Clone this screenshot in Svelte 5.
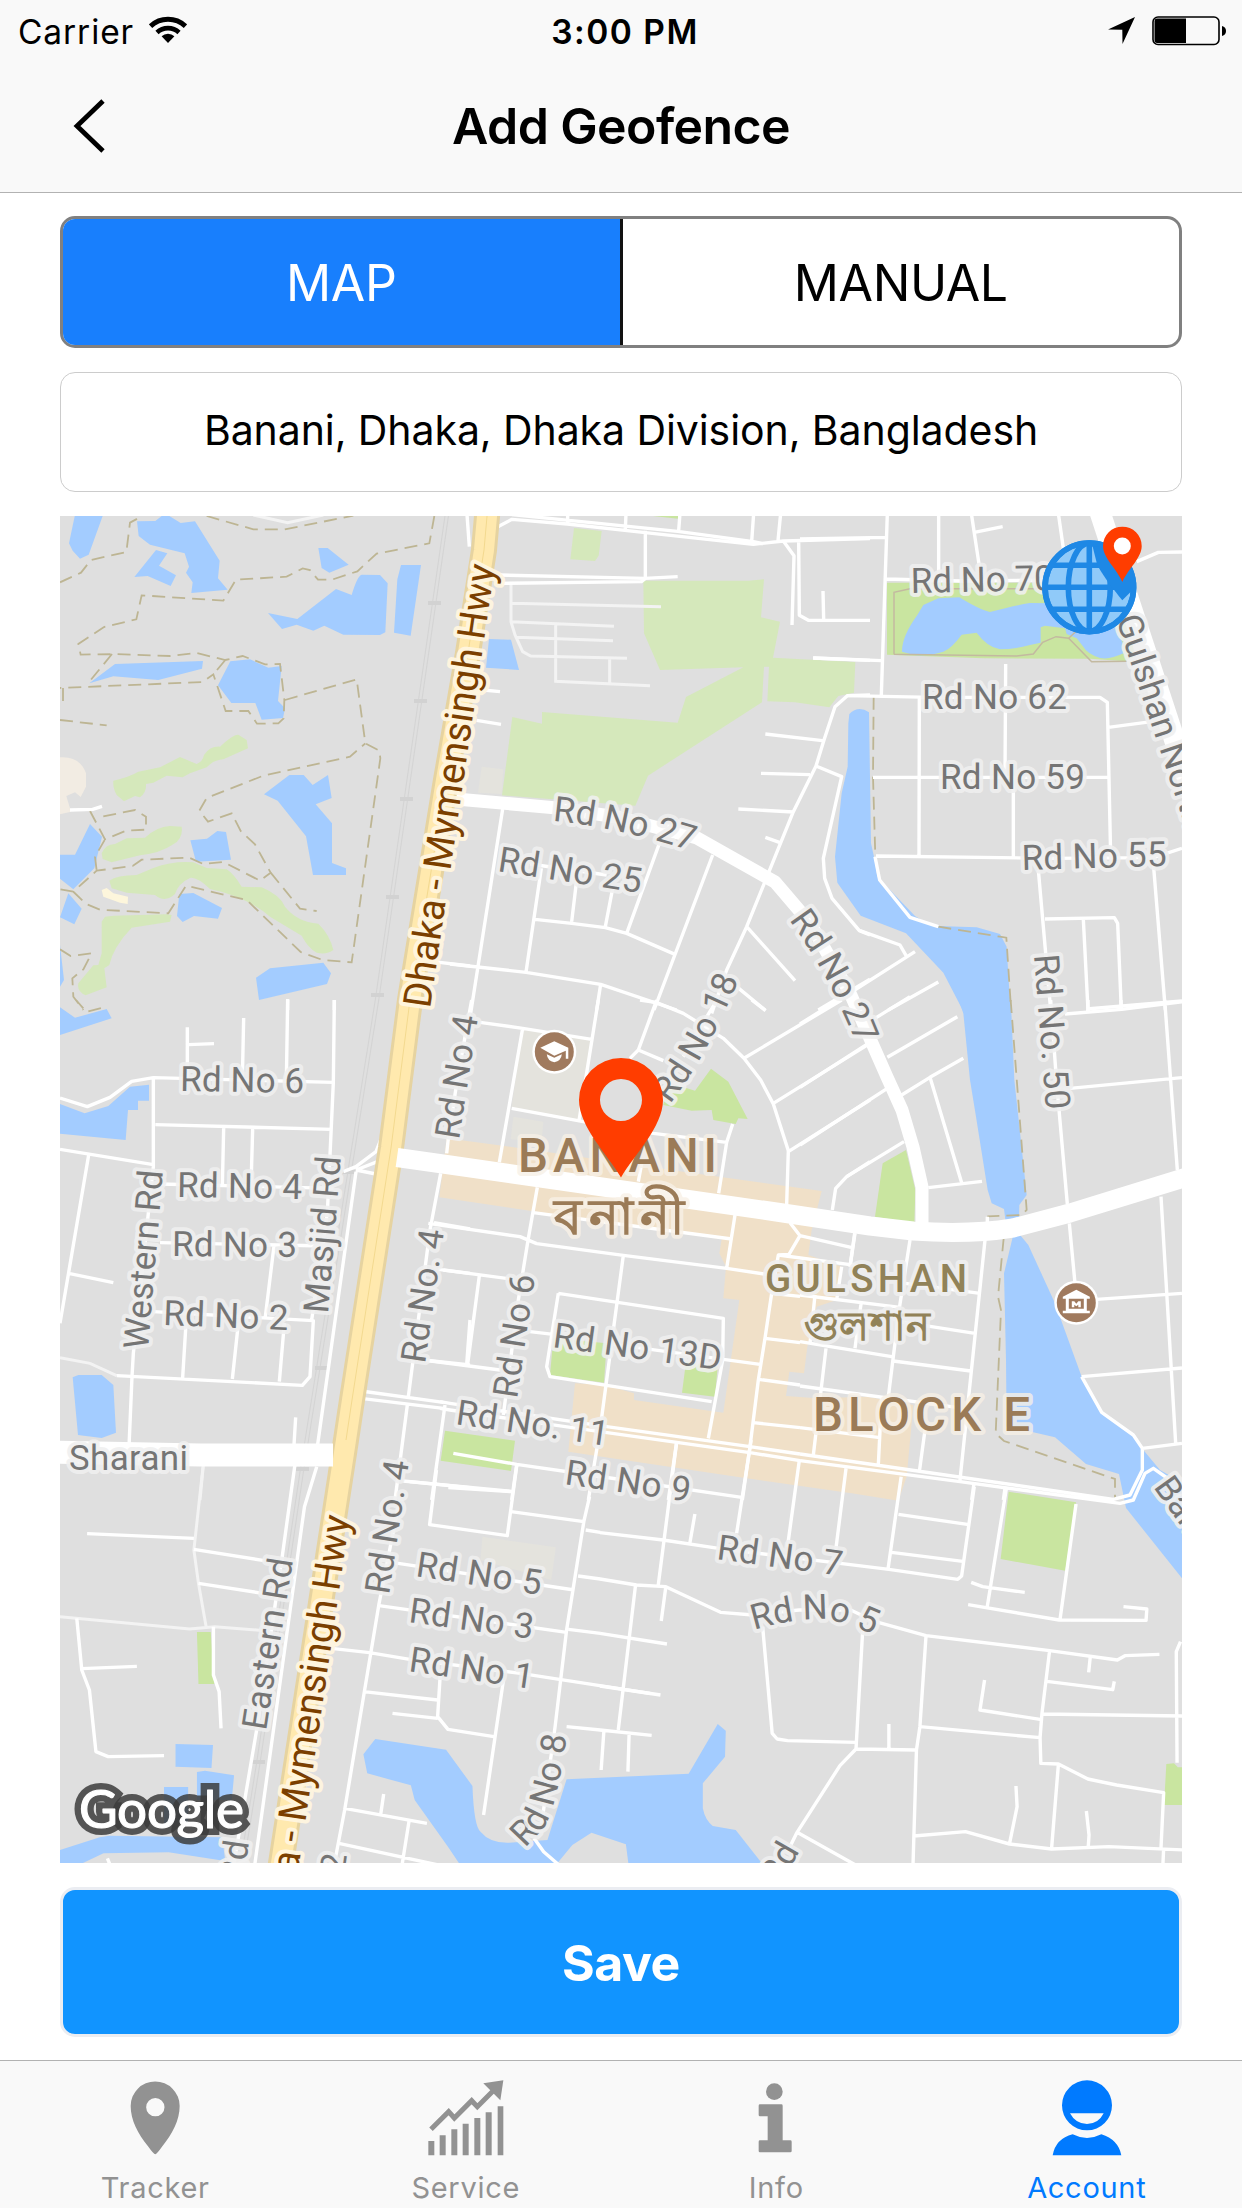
<script>
  // Each sheet is one survey square of the map: its origin on the page,
  // its horizontal/vertical scale, and the outlines drawn inside it.
  const sheets = [
    {
      x: 50, y: 510, sx: 3, sy: 3,
      water: 'M78 0L160 0L158 18L116 134L90 146L68 122L57 100Z M261 34L316 33L335 18L358 18L392 39L435 34L509 152L504 205L533 239L424 249L428 217L408 188L417 170L404 130L300 104L266 78Z M318 120L352 130L327 167L378 196L362 228L293 198L253 201Z M805 114L833 114L896 164L838 188L815 174Z M654 309L742 327L858 237L905 255Q922 197 935 194L990 195L1013 220L1006 367L990 375L880 374L823 347L790 362L740 344L696 357Z M1053 165L1113 165L1082 377L1032 368L1042 208Z M118 520L195 462L459 453L456 476L325 510L190 499Z M541 454L600 448L655 473L695 468L684 573L705 595L699 624L635 629L616 579L544 579L504 526Z M642 853L718 795L761 795L788 825L834 795L845 864L797 883L846 940L846 1059L888 1075L888 1095L789 1095L768 979L683 872Z M421 991L471 986L502 963L528 966L543 1049L438 1055Z M30 1034L75 1034L120 942L156 980L133 1075L70 1138L30 1106Z M55 1150L95 1196L73 1243L30 1222Z M388 1152L430 1149L516 1194L504 1226L432 1218L398 1236L381 1218Z M618 1403L660 1375L820 1358L843 1390L831 1422L627 1470Z M30 1305L42 1410L30 1430Z',
      lawn: 'M190 812Q240 800 265 785L330 772L390 741L440 762Q458 755 462 735Q480 708 510 710Q550 672 565 674L590 690L594 715L520 748Q490 750 470 772L420 790L398 802L350 797L310 818L288 822Q290 848 270 862L255 858L222 874L200 855Q188 835 190 812Z M155 1030Q165 1003 195 1002L230 985L285 983Q320 950 360 948L395 950Q400 985 370 1003Q330 1030 270 1036L185 1057L158 1047Z M178 1112Q200 1096 260 1095L310 1074Q370 1052 430 1057L470 1074L530 1078Q550 1090 575 1130L635 1132Q690 1155 705 1190Q740 1235 805 1241Q840 1275 850 1320Q830 1335 800 1328Q775 1315 755 1277L660 1220Q590 1160 480 1137Q440 1100 420 1104Q385 1120 375 1152Q345 1180 315 1155L230 1148L185 1135Z M165 1220L190 1217L350 1213L365 1215L360 1235L245 1253Q190 1310 178 1365L163 1375L170 1432L107 1456Q80 1445 85 1420L130 1366L145 1365L155 1330L155 1235Z',
      sand: 'M155 1140L170 1134L190 1150L234 1160L233 1182L210 1178L160 1160Z',
      arena: 'M30 742Q90 738 108 790L108 830L92 861L75 847L49 858L63 905L30 913Z',
      trail: 'M30 217L93 188L123 150L229 126L240 38L262 26 M470 18L610 58L704 58L910 17 M1153 18L1138 100L980 131L922 184L846 209L804 209L780 180L758 175L710 200L558 209L520 272L275 256L259 328L162 351L85 402L92 434L186 432L360 438L440 429L526 450L578 438L645 463L690 462L703 570L701 625L685 640L621 641L595 603L527 603L490 493L458 516L30 534 M186 432L118 515 M526 450L490 493 M39 534V580 M30 630L170 646 M705 570L920 508L946 700L988 722L991 745L905 1357L818 1350L752 1326L590 1170L408 1127L355 1210L150 1199L108 1182L70 1145L140 1082L248 1068L275 1049L418 1043L460 1062L520 1056L630 1112L662 1088L615 1003L572 963L545 910L474 935L448 902L470 864L640 797L900 740L946 700 M662 1088L750 1196L800 1203 M120 903L165 988L228 962L288 959V920L255 900L155 920 M165 988L135 1040L140 1082 M70 1145L30 1138 M30 1318L62 1338L125 1330L100 1378L67 1405L70 1460L100 1500',
      road: 'M60 900L128 898L156 889 M713 1467V1500 M853 1470V1500 M1250 0L1258 110 M1150 1355L1260 1368',
      lane: 'M610 15L713 38L820 15'
    },
    {
      x: 450, y: 510, sx: 3, sy: 3,
      water: 'M117 387L183 389L207 480L108 473Z',
      lawn: 'M580 212L896 212L942 208L933 322L990 335L969 443L1216 456L1212 548L1165 558L1138 592L1035 577L952 574L957 470L942 470L936 577L594 797L556 887L156 856L187 621L276 641V606L683 638L708 561L880 472L630 480L582 370Z M372 54L455 63L446 137L435 153L361 148Z',
      park: 'M609 10L684 10V26L609 18Z',
      plot: 'M95 770L160 778L155 852L84 848Z',
      road: 'M135 55L186 28L352 42L586 68L910 103L1000 93L1260 86 M186 14L683 64L910 95L940 101 M353 10V42 M528 10L526 58 M690 10L686 62 M911 10L905 95 M992 10L984 92 M586 62V205L574 215L155 220 M150 195L585 205L683 200 M1000 93L1032 137L1026 345 M1046 90L1048 316L1075 331L1260 331 M1119 243L1121 328 M1089 444L1260 451 M100 540L150 545 M80 631L153 643 M1260 555L1192 557L1155 590L1122 690L1098 768L1030 905L957 1085L890 1250L830 1380L785 1510 M946 672L1117 692 M933 790L1080 794 M865 897L1030 906 M946 982L988 997 M1098 768L1175 800L1120 1045L1124 1105L1146 1165L1228 1262L1260 1275 M158 897L62 1510 M274 1075L228 1387 M380 1110L365 1235 M488 1135L466 1250 M630 995L530 1270 M788 1035L612 1500 M255 1228L365 1240L466 1253L530 1270L675 1333 M240 1062L470 1095 M0 1362L228 1387L452 1423L680 1500 M452 1423L440 1500 M890 1250L1035 1412 M860 1430L945 1500 M1105 1500L1260 1408',
      lane: 'M183 222V335L195 375L218 425L242 438L531 445 M186 280L633 290 M183 335L492 349 M200 382L489 392 M317 345V514L600 527 M479 447V520'
    },
    {
      x: 800, y: 510, sx: 3, sy: 3,
      park: 'M261 218L735 218L1000 240L1000 455L870 446L550 445L261 434Z',
      water: 'M306 425Q305 380 352 315L370 285L415 265L478 262Q540 300 570 306Q650 285 690 279L760 280L820 330L940 330L968 400L970 430Q930 450 900 444Q860 430 850 410L830 385L800 372L795 355L735 347L722 352V398L690 405Q640 418 600 418Q560 410 530 368L485 374Q455 415 430 425Q380 440 340 434Z M148 612Q175 585 207 607L213 1000L222 1040L232 1100L345 1218L380 1240L410 1248L530 1252L600 1272L620 1310L632 1510L490 1510L488 1500L430 1388L318 1270L182 1217L112 1118L105 1040L125 850L143 770L145 640Z',
      trail: 'M221 560L219 800L226 1040 M415 1250L600 1280L619 1283L632 1480',
      path: 'M282 433V247L330 236H735 M282 433L650 438L700 432L728 397L768 380L806 385L875 455L980 454 M806 385L830 362',
      road: 'M0 87L258 82 M262 10L244 555 M40 444L244 452 M416 10V210 M514 10L545 215 M523 67L608 50 M775 10L790 115 M258 207L480 213L760 210 M1010 155L1075 127L1146 126 M140 557L400 562L900 562L922 577L932 1040 M925 652L1060 634 M358 565L357 1037 M617 462L615 802 M640 802V1045 M219 802H922 M228 1038L750 1045L1060 1043L1146 1015 M225 1040L239 1110L330 1222L415 1250 M345 1325L70 1500 M415 1416L265 1500 M180 1262L300 1305L320 1340 M715 1080L752 1500 M1060 1060L1096 1500 M735 1227L943 1223L953 1240L964 1500 M850 1228L864 1500 M860 1497L1146 1473'
    },
    {
      x: 50, y: 1000, sx: 3, sy: 3,
      water: 'M30 22L75 53L170 27L185 55L30 105Z M30 312L104 340L175 318L240 260L297 254V302H264V330H234L227 420L30 401Z M68 1132L85 1125H155L190 1155L198 1298L155 1314L84 1305Z',
      trail: 'M78 0L100 25 M115 34L155 24',
      road: 'M30 294L112 320L180 292L245 244L310 233L850 247 M853 0L850 247L832 640L785 960 M713 0L709 245 M412 82V240 M415 134L492 131 M581 54L577 240 M310 233V500L250 1060L246 1130L237 1340 M316 374L847 388 M521 385L517 560 M608 387L603 560 M30 448L310 494 M116 465L30 970 M56 820L190 848 M330 552L850 565 M330 728L830 738 M672 738L646 950 M310 935L790 962L780 1130L757 1156L200 1127 M408 970L398 1133 M565 970L547 1137 M703 970L688 1145 M737 1252L732 1335 M918 515L802 1340 M880 515L918 500L978 455L1010 375 M918 510L990 482 M918 510L978 522 M1195 415L1190 460 M1172 520L1140 690L1075 1190 M1072 1215L1035 1500 M1152 668L1260 687 M1180 810L1260 820 M1120 1080L1260 1095 M1260 960L1250 1095 M1185 1215L1145 1500 M1060 1443L1260 1463 M933 1173L1180 1207 M933 1195L1180 1225',
      lane: 'M30 1073L120 1090L200 1127 M460 1395L450 1500'
    },
    {
      x: 450, y: 1000, sx: 3, sy: 3,
      blocks: 'M-10 415L230 447L640 507L1115 573L1085 690L1075 765L1175 800L1160 900L1100 920L1072 1040L1062 1120L1018 1115L1008 1188L1100 1195L1250 1190L1390 1215L1370 1430L1345 1502L1205 1480L890 1435L355 1355L375 1150L465 1155L552 1180V1200L820 1238L868 900L820 895L828 800L808 760L815 718L-32 592Z',
      park: 'M650 270L680 255L735 272L783 206L835 245L893 357L865 355L857 372L790 360L785 330L725 332L640 315Z M310 1015L470 1030L462 1148L300 1125Z M708 1085L803 1100L795 1190L696 1178Z M-15 1292L195 1322L183 1413L-28 1382Z',
      plot: 'M218 85L425 118L392 362L185 322Z M190 350L280 365L275 425L182 418Z',
      road: 'M65 0L20 250L-5 420 M90 67L218 85L425 118 M218 85L148 487 M445 0L387 362 M185 325L400 365L610 400L830 427 M848 372L830 427L806 580 M620 0L565 150L540 175 M570 0L620 8L700 40L820 115L882 175L932 240L970 312L1015 452L1010 612 M565 150L640 182 M800 0L700 170 M905 0L947 32 M882 175L1175 0 M970 310L1260 130 M1015 455L1260 300 M1260 485L1190 530L1157 565L1147 630 M262 562L235 715L205 900L160 1245 M250 638L845 717 M855 645L830 805 M-65 670L210 710L260 731L520 766L830 805L950 823 M520 766L490 990L450 1290L415 1500 M325 880L820 955L818 1080L775 1315 M325 880L290 1100L300 1130L785 1205 M240 995L310 1003 M470 1030L930 1093 M88 827L53 1093 M-35 808L190 838 M-80 1080L150 1110 M575 490L565 545 M1020 668L1050 707L1017 763L985 765L965 880L945 1015L925 1140L900 1340L877 1500 M1050 707L1203 742 M985 765L1245 800 M1214 700L1200 800 M965 880L1050 889 M945 1015L1050 1028 M925 1138L1050 1155 M910 1268L1050 1283 M1095 885L1080 1030 M1175 800L1160 900 M680 1325L655 1500 M10 1360L200 1393L420 1425L875 1492 M200 1395L185 1500 M-5 1463L185 1475 M-30 1205L0 1210L470 1280L900 1340L1050 1362 M-30 1225L0 1230L450 1295L900 1358L1050 1382'
    },
    {
      x: 800, y: 1000, sx: 3, sy: 3,
      water: 'M472 -10H632L643 240L668 470L680 585L658 615L656 700L685 735L765 910L845 1130L905 1235L1000 1305L1030 1350L1080 1410L1150 1450V1740L978 1524L957 1422L858 1392L765 1312L700 1297L620 1280L618 1080L612 820L638 712L620 690L612 627L575 610L563 570L528 350L510 240L490 40Z',
      park: 'M248 490L318 450L346 570L343 670L225 650Z',
      trail: 'M632 0L680 630L665 645L562 649 M611 715L594 890L603 930L587 1300L612 1323L945 1437V1500',
      road: 'M0 72L115 0 M0 262L205 130 M225 55L330 -10 M262 172L472 50 M0 435L262 265 M305 285L390 232L490 175 M390 232L485 548 M385 563L546 544 M140 530L312 425 M562 650V680 M165 700L150 800 M330 720L298 925L265 1190 M555 720L480 1440 M315 850L540 880 M298 965L525 1000 M280 1083L512 1113 M0 1025L275 1070 M0 885L300 922 M183 912L165 1045 M0 1158L470 1222 M245 1190L235 1395 M375 1290L358 1415 M78 1045L40 1365 M0 1283L240 1313 M752 0L770 250L802 612 M808 670L825 850 M795 42L965 28L1146 5 M864 0V35 M963 0V28 M1094 0L1132 510 M810 265L1146 233 M890 898L1146 880 M1083 590L1127 1330 M845 1130L1146 1104 M845 1130L905 1237L1000 1305L1027 1345L1146 1330 M1027 1345V1410L990 1485L940 1498L0 1362 M0 1382L480 1445L960 1510L1000 1500L1035 1420L1060 1405L1110 1440 M522 1450L515 1500 M615 1465L610 1500'
    },
    {
      x: 50, y: 1440, sx: 2.6133, sy: 3,
      water: 'M328 912L426 915L422 984L328 980Z M384 996L405 992L481 1006L475 1080H384Z M298 1041H361V1150H298Z M20 1232L130 1192L155 1187L450 1192L458 1263L310 1237L140 1240L75 1275H20Z M850 897L1035 929L1104 1038Q1108 1160 1125 1175Q1150 1210 1200 1208L1300 1200L1350 1018L1669 1001L1745 852L1766 872L1764 950L1706 1030V1105Q1712 1140 1732 1158L1792 1170L1864 1275H1512L1505 1213L1415 1178L1365 1215L1322 1275H1072L1040 1220L953 1080L943 1036L829 1000L819 943Z',
      park: 'M384 576H420L430 732H388Z',
      plot: 'M1130 290L1322 322L1310 420L1250 400L1125 360Z',
      road: 'M640 75L605 365L540 870L480 1275 M697 80L665 200L535 1275 M97 281L376 295 M376 328L560 362 M388 430L555 460 M70 535L83 690L103 750L120 935L152 950L298 947 M83 686L227 679 M427 560V705L442 755L447 865 M150 1255L157 1275 M735 625L835 638L940 658L1230 700L1568 760 M910 200L860 490L770 1110L745 1260 M1010 90L992 254L1195 287L1220 75 M940 125L1205 154 M1205 215L1395 245 M1410 170L1395 245L1350 570L1320 860L1285 1150 M1400 270L1438 277 M880 365L1370 450 M860 497L1350 577 M1380 408L1438 417 M1530 437L1485 870 M1355 568L1438 580 M820 755L1013 780 M1020 700L1013 830L1040 868L1160 890 M895 820L1013 835 M1185 720L1133 1125 M1350 860L1438 870 M770 1105L985 1150 M872 1062L864 1125 M755 1210L1015 1275 M938 1145L920 1275 M1265 1195L1290 1235L1330 1275',
      lane: 'M400 80L376 330L388 430L408 560 M26 530L365 567L430 560L560 572'
    },
    {
      x: 600, y: 1440, sx: 2.6133, sy: 3,
      park: 'M1068 155L1244 187L1216 392L1047 357Z M1480 972L1500 970L1510 982H1530V1095H1474Z',
      road: 'M0 278L165 300L310 325L755 388L935 418L945 408L978 140 M200 10L152 437 M395 0L357 280 M521 60L490 320 M643 85L615 340 M787 110L753 385 M780 223L960 253 M762 337L948 364 M248 222L235 308 M0 417L95 435L172 440L315 517L400 525L520 510L655 510L720 545L852 587L1175 632L1352 660L1372 647L1462 643 M172 440L160 543 M0 580L175 612 M0 738L158 765 M0 870L135 886 M10 875L3 990 M76 885L73 995 M425 560L450 880L463 897L490 902L670 907 M687 560L669 927L825 930 M669 927L627 977L515 1177L490 1235 M515 1177L668 1275 M755 852V928 M852 587L836 860L827 930L818 1275 M836 860L1150 893 M1175 632L1155 820L1150 893L1152 970L1198 972L1275 1017L1350 1035L1473 1058L1466 1225 M1473 1225L1471 1275 M1168 724L1340 749L1344 724 M1281 653L1277 697 M1005 720L993 810L1150 838 M1155 822L1530 828 M1198 972L1180 1227 M820 1188L955 1175L1070 1212L1180 1227L1330 1220L1530 1230 M1087 1038L1090 1100L1070 1212 M1271 1113L1278 1185L1276 1220 M1517 605L1506 635L1508 968 M962 494L1200 540L1427 541L1429 507L1368 500 M970 427L1000 440L1110 457 M1062 145L1012 500 M1244 192L1202 540'
    }
  ];

  const areaKinds = ['blocks', 'plot', 'arena', 'lawn', 'park', 'sand', 'water'];
  const lineKinds = ['path', 'trail', 'lane', 'road'];

  // Straight labels: text, baseline start, baseline end.
  const labels = [
    ['Rd No 25', 497, 871, 640, 893],
    ['Rd No 70', 911, 593, 1054, 590],
    ['Rd No 62', 922, 709, 1067, 709],
    ['Rd No 59', 940, 789, 1085, 789],
    ['Rd No 55', 1022, 870, 1167, 866],
    ['Rd No. 50', 1034, 955, 1046, 1110],
    ['Rd No 4', 459, 1140, 478, 1017],
    ['Rd No 6', 180, 1091, 304, 1093],
    ['Rd No 4', 177, 1197, 302, 1199],
    ['Rd No 3', 172, 1256, 297, 1257],
    ['Rd No 2', 163, 1325, 288, 1330],
    ['Western Rd', 148, 1350, 163, 1171],
    ['Masjid Rd', 328, 1314, 341, 1157],
    ['Rd No. 4', 425, 1364, 444, 1231],
    ['Sharani', 69, 1470, 188, 1470],
    ['Rd No 6', 517, 1399, 535, 1276],
    ['Rd No 13D', 552, 1347, 720, 1370],
    ['Rd No. 11', 455, 1424, 607, 1446],
    ['Rd No 9', 564, 1484, 689, 1502],
    ['Rd No 7', 716, 1559, 841, 1576],
    ['Rd No. 4', 389, 1595, 409, 1462],
    ['Rd No 5', 415, 1576, 540, 1595],
    ['Rd No 3', 408, 1622, 532, 1639],
    ['Rd No 1', 408, 1671, 532, 1689],
    ['Eastern Rd', 266, 1731, 293, 1560],
    ['Rd', 243, 1884, 249, 1842],
    ['Rd No 2', 330, 1977, 347, 1855],
    ['Rd', 779, 1887, 800, 1851],
    ['Dhaka - Mymensingh Hwy', 430, 1009, 495, 566, 'highway'],
    ['Dhaka - Mymensingh Hwy', 285, 1961, 350, 1517, 'highway'],
    ['GULSHAN', 765, 1292, 967, 1292, 'suburb'],
    ['গুলশান', 804, 1340, 930, 1340, 'suburb-local'],
    ['BLOCK E', 813, 1431, 1030, 1431, 'district'],
    ['BANANI', 518, 1172, 717, 1172, 'district'],
    ['বনানী', 554, 1234, 684, 1234, 'district-local']
  ].map(([text, x1, y1, x2, y2, kind = 'street']) => ({
    text, kind, x: x1, y: y1,
    angle: (Math.atan2(y2 - y1, x2 - x1) * 180) / Math.PI,
    length: Math.hypot(x2 - x1, y2 - y1)
  }));

  const curved = [
    { id: 'c1', text: 'Rd No 27', d: 'M553 821Q620 827 715 858' },
    { id: 'c2', text: 'Rd No 27', d: 'M789 920Q834 980 867 1072' },
    { id: 'c3', text: 'Rd No 18', d: 'M670 1104Q716 1044 750 950' },
    { id: 'c4', text: 'Gulshan North Ave', d: 'M1116 619L1230 960' },
    { id: 'c5', text: 'Rd No 5', d: 'M754 1630Q790 1619 822 1619Q850 1621 900 1648' },
    { id: 'c6', text: 'Rd No 8', d: 'M525 1848L544 1828Q561 1798 571 1700' },
    { id: 'c7', text: 'Baridhara', d: 'M1153 1487L1250 1622' }
  ];

  const sleepers = [[434, 603], [420, 701], [406, 799], [392, 897], [377, 995], [348, 1172], [321, 1368], [302, 1469], [258, 1762]];

  let mode = $state('MAP');
</script>

<div class="screen">
  <header>
    <div class="status">
      <div class="carrier">
        <span>Carrier</span>
        <svg width="38" height="27" viewBox="0 0 38 27">
          <path d="M1.5 10.2A25.500 25.500 0 0 1 36.500 10.200" fill="none" stroke="#000" stroke-width="5" />
          <path d="M8 16.500A16 16 0 0 1 30 16.500" fill="none" stroke="#000" stroke-width="4.600" />
          <path d="M19 27L12.600 20.300A9 9 0 0 1 25.400 20.300Z" />
        </svg>
      </div>
      <span class="clock">3:00 PM</span>
      <div class="power">
        <svg width="27" height="27" viewBox="0 0 27 27"><path d="M27 0L14.500 27L14.300 12.700L0 12.500Z" /></svg>
        <svg width="75" height="30" viewBox="0 0 75 30">
          <rect x="1" y="1" width="66" height="27.500" rx="5" fill="none" stroke="#000" stroke-width="1.600" />
          <path d="M5 2.500H34V27H5Q2.500 27 2.500 24V5.500Q2.500 2.500 5 2.500Z" />
          <path d="M70 10Q74 11 74 15T70 20Z" />
        </svg>
      </div>
    </div>
    <div class="nav">
      <svg class="back" width="34" height="56" viewBox="0 0 34 56"><path d="M30 3L4 28L30 53" fill="none" stroke="#000" stroke-width="4.800" /></svg>
      <h1>Add Geofence</h1>
    </div>
  </header>

  <main>
    <div class="segment">
      {#each ['MAP', 'MANUAL'] as option}
        <button class:active={mode === option} onclick={() => (mode = option)}>{option}</button>
      {/each}
    </div>

    <div class="address"><span>Banani, Dhaka, Dhaka Division, Bangladesh</span></div>

    <svg class="map" width="1122" height="1347" viewBox="60 516 1122 1347">
      {#each areaKinds as kind}
        {#each sheets as s}
          {#if s[kind]}
            <path class={kind} d={s[kind]} transform="translate({s.x} {s.y}) scale({1 / s.sx} {1 / s.sy})" />
          {/if}
        {/each}
      {/each}

      <path class="rail" d="M449 500L377 1000L302 1470L258 1765L241 1870" />
      <path class="rail-gap" d="M449 500L377 1000L302 1470L258 1765L241 1870" />
      {#each sleepers as [x, y]}
        <rect class="sleeper" x={x - 6} y={y - 2} width="13" height="4" />
      {/each}

      {#each lineKinds as kind}
        {#each sheets as s}
          {#if s[kind]}
            <path class="line {kind}" d={s[kind]} transform="translate({s.x} {s.y}) scale({1 / s.sx} {1 / s.sy})" />
          {/if}
        {/each}
      {/each}

      <path class="avenue" stroke-width="13" d="M456 799L557 808L617 817L697 838L775 882L810 923L850 993L872 1043L887 1077L902 1110L913 1147L922 1187V1227" />
      <path class="avenue" stroke-width="21" d="M1096 500L1190 787" />
      <path class="motorway-edge" d="M488 505L484 550L468 653L446 780L410 1000L391 1148L352 1400L346 1440L280 1870" />
      <path class="motorway" d="M488 505L484 550L468 653L446 780L410 1000L391 1148L352 1400L346 1440L280 1870" />
      <path class="median" d="M488 505L484 550L468 653L446 780L410 1000L391 1148L352 1400L346 1440" />
      <path class="avenue" stroke-width="19" d="M397 1157.500L450 1165L783 1213L870 1226L913 1231Q970 1235 1013 1228L1070 1213L1190 1176" />
      <path class="avenue" stroke-width="23" d="M50 1452L200 1455H333" />

      {#each labels as l}
        <text class={l.kind} transform="translate({l.x} {l.y}) rotate({l.angle})" textLength={l.length}>{l.text}</text>
      {/each}
      {#each curved as c}
        <path id={c.id} d={c.d} fill="none" />
        <text class="street"><textPath href="#{c.id}">{c.text}</textPath></text>
      {/each}

      <g transform="translate(554.300 1051.700)">
        <circle r="22" fill="#fff" />
        <circle r="19.500" fill="#a07a5e" />
        <path fill="#fff" d="M0 -10.500L14 -4V7H11.500V-1L0 4L-14 -4ZM-7.500 2.500L0 6L7.500 2.500Q7 9 0 10.500Q-7 9 -7.500 2.500Z" />
      </g>
      <g transform="translate(1076.300 1302.700)">
        <circle r="22" fill="#fff" />
        <circle r="19.500" fill="#a07a5e" />
        <path fill="#fff" fill-rule="evenodd" d="M0 -13L13.500 -6V-4H10.500V8H13.500V10.500H-13.500V8H-10.500V-4H-13.500V-6ZM-7.500 -4V6H7.500V-4Z" />
        <path fill="#fff" d="M-4.500 -1.500H-2L0 1L2 -1.500H4.500V4.500H2V2L0 3.500L-2 2V4.500H-4.500Z" />
      </g>

      <path class="pin" fill-rule="evenodd" d="M621 1177.500C608 1155 579 1127 579 1100A42 42 0 0 1 663 1100C663 1127 634 1155 621 1177.500ZM621 1079A21 21 0 1 0 621 1121A21 21 0 1 0 621 1079Z" />

      <g class="globe" transform="translate(1089.300 587.300)">
        <circle r="44.300" fill="#90caf9" />
        <path d="M0 -44V44M-44 0H44M-37 -22H37M-37 22H37" />
        <ellipse rx="21" ry="44" />
        <path class="shade" d="M2 -46C24 -44 45 -26 46 0L33 13C24 2 16 -8 8 -22Z" />
        <circle r="44.300" />
      </g>
      <path class="pin" d="M1122.300 582C1117 569 1103 558 1103 546A19.300 19.300 0 0 1 1141.700 546C1141.700 558 1128 569 1122.300 582Z" />
      <circle cx="1122.300" cy="546" r="8.500" fill="#fff" />

      <text class="logo logo-edge" x="79" y="1828" textLength="165">Google</text>
      <text class="logo logo-face" x="79" y="1828" textLength="165">Google</text>
    </svg>

    <button class="save">Save</button>
  </main>

  <footer>
    <div class="tab">
      <svg width="100" height="80" viewBox="76 50 300 240"><path fill-rule="evenodd" d="M227 282Q222 282 205 258C175 220 153 180 153 137A73.500 73.500 0 0 1 300 137C300 180 278 220 248 258Q231 282 227 282ZM227 113A27.500 27.500 0 1 0 227 168A27.500 27.500 0 1 0 227 113Z" /></svg>
      <span>Tracker</span>
    </div>
    <div class="tab">
      <svg width="100" height="80" viewBox="1007 50 300 240">
        <path d="M1044 242h18v43h-18zM1078 225h18v60h-18zM1113 207h18v78h-18zM1147 190h18v95h-18zM1182 173h18v112h-18zM1216 156h18v129h-18zM1252 138h17v147h-17z" />
        <path d="M1052 207L1105 154L1122 173L1174 121L1191 139L1238 92" fill="none" stroke="#929292" stroke-width="15" />
        <path d="M1209 69L1269 60L1260 120Z" />
      </svg>
      <span>Service</span>
    </div>
    <div class="tab">
      <svg width="100" height="80" viewBox="19 50 300 240">
        <circle cx="164" cy="94" r="25" />
        <path d="M121 132H185Q189 132 189 136V240H212Q216 240 216 244V272Q216 276 212 276H121Q117 276 117 272V244Q117 240 121 240H144V168H121Q117 168 117 164V136Q117 132 121 132Z" />
      </svg>
      <span>Info</span>
    </div>
    <div class="tab current">
      <svg width="100" height="80" viewBox="950 50 300 240">
        <path fill-rule="evenodd" d="M1100 60A75 75 0 1 0 1100 210A75 75 0 1 0 1100 60ZM1049 159H1150Q1134 191 1100 191T1049 159Z" />
        <path d="M997 285Q1006 235 1057 222Q1100 244 1143 222Q1194 238 1203 285Z" />
      </svg>
      <span>Account</span>
    </div>
  </footer>
</div>

<style>
  :global(body) { margin: 0; background: #fff; }

  .screen {
    width: 1242px;
    height: 2208px;
    display: flex;
    flex-direction: column;
    background: #fff;
    color: #000;
    font-family: Inter, 'Liberation Sans', sans-serif;
    overflow: hidden;
  }

  header {
    height: 192px;
    background: #f9f9f9;
    border-bottom: 1px solid #b2b2b2;
  }
  .status {
    display: grid;
    grid-template-columns: 1fr auto 1fr;
    align-items: center;
    height: 60px;
    padding: 0 15px 0 18px;
    font-size: 33.500px;
  }
  .carrier { display: flex; align-items: center; gap: 15px; letter-spacing: 0.900px; }
  .carrier span { padding-top: 3px; }
  .carrier svg { margin-top: -2px; }
  .clock { font-weight: 600; font-size: 33.500px; padding: 3px 0 0 5px; letter-spacing: 1.500px; }
  .power { display: flex; justify-content: flex-end; align-items: center; gap: 17px; padding-top: 1px; }
  .nav {
    display: grid;
    grid-template-columns: 120px 1fr 120px;
    align-items: center;
    height: 132px;
  }
  .back { margin-left: 73px; }
  h1 {
    margin: 0;
    font-size: 50px;
    font-weight: 600;
    line-height: 60px;
    text-align: center;
    letter-spacing: -0.600px;
  }

  main {
    display: flex;
    flex-direction: column;
    padding: 23px 60px 0;
    height: 1844px;
  }
  button {
    font-family: inherit;
    padding: 0;
    margin: 0;
    border: 0;
    background: none;
    color: inherit;
  }
  .segment {
    box-sizing: border-box;
    display: flex;
    height: 132px;
    border: 3px solid #808080;
    border-radius: 15px;
    overflow: hidden;
  }
  .segment button { flex: 1; font-size: 50px; letter-spacing: -0.400px; padding-top: 2px; }
  .segment button + button { border-left: 3px solid #111; }
  .segment .active { background: #187ffd; color: #fff; }

  .address {
    box-sizing: border-box;
    display: flex;
    align-items: center;
    justify-content: center;
    height: 120px;
    margin: 24px 0;
    border: 1px solid #ccc;
    border-radius: 15px;
    font-size: 41px;
    letter-spacing: -0.080px;
    white-space: nowrap;
  }
  .address span { margin-top: -4px; }

  .map { display: block; flex: none; background: #dfdfdf; overflow: hidden; }
  .blocks { fill: #f0e0c8; }
  .plot { fill: #e4e3dd; }
  .arena { fill: #f2ece3; }
  .lawn { fill: #d5e8bb; }
  .park { fill: #c9e5a0; }
  .sand { fill: #fdf6dc; }
  .water { fill: #a3ccff; }
  .line { fill: none; vector-effect: non-scaling-stroke; }
  .path { stroke: #c3b9a0; stroke-width: 1.500; }
  .trail { stroke: #bdb593; stroke-width: 1.800; stroke-dasharray: 13 7; }
  .lane { stroke: #f3f3f3; stroke-width: 3; }
  .road { stroke: #fff; stroke-width: 3.400; stroke-linejoin: round; }
  .rail { fill: none; stroke: #d4d4d4; stroke-width: 4.500; }
  .rail-gap { fill: none; stroke: #dfdfdf; stroke-width: 2.300; }
  .sleeper { fill: #d2d2d2; }
  .avenue { fill: none; stroke: #fff; stroke-linejoin: round; }
  .motorway-edge { fill: none; stroke: #e6d3a0; stroke-width: 26; }
  .motorway { fill: none; stroke: #ffe9ae; stroke-width: 20; }
  .median { fill: none; stroke: #f3d98f; stroke-width: 1; }

  .map text {
    font-family: Roboto, sans-serif;
    font-size: 35px;
    paint-order: stroke;
    stroke: rgba(240, 240, 240, 0.900);
    stroke-width: 8px;
    stroke-linejoin: round;
    fill: #757575;
  }
  .map .highway { font-size: 39px; fill: #7b3f00; stroke: rgba(255, 246, 224, 0.950); }
  .map .district { font-size: 47.500px; font-weight: 500; fill: #9b7b57; stroke: rgba(247, 240, 230, 0.800); }
  .map .suburb { font-size: 38.500px; font-weight: 500; fill: #918258; }
  .map .district-local { font-size: 50px; font-weight: 700; fill: #9b7b57; stroke: rgba(247, 240, 230, 0.800); }
  .map .suburb-local { font-size: 40px; font-weight: 700; fill: #918258; }
  .pin { fill: #ff3d00; }
  .globe { fill: none; stroke: #1e88e5; stroke-width: 5.600; }
  .globe .shade { fill: #1e88e5; stroke: none; }
  .map .logo { font-family: Lato, sans-serif; font-size: 53px; font-weight: 400; }
  .map .logo-edge { fill: #5a5a5a; stroke: rgba(60, 60, 60, 0.850); stroke-width: 14px; stroke-linejoin: miter; }
  .map .logo-face { fill: #fff; stroke: #fff; stroke-width: 1.200px; }

  .save {
    box-sizing: border-box;
    flex: none;
    height: 150px;
    margin-top: 24px;
    border: 3px solid #ebedf2;
    border-radius: 15px;
    background: #1194ff;
    color: #fff;
    padding-top: 2px;
    font-size: 50px;
    font-weight: 700;
    letter-spacing: -0.500px;
  }

  footer {
    box-sizing: border-box;
    display: grid;
    grid-template-columns: repeat(4, 1fr);
    height: 148px;
    margin-top: auto;
    padding-top: 16px;
    border-top: 1px solid #b2b2b2;
    background: #f9f9f9;
  }
  .tab {
    display: flex;
    flex-direction: column;
    align-items: center;
    color: #929292;
    fill: #929292;
    font-size: 29px;
    line-height: 36px;
    letter-spacing: 0.700px;
  }
  .tab span { margin-top: 13px; }
  .current { color: #007aff; fill: #007aff; }
</style>
